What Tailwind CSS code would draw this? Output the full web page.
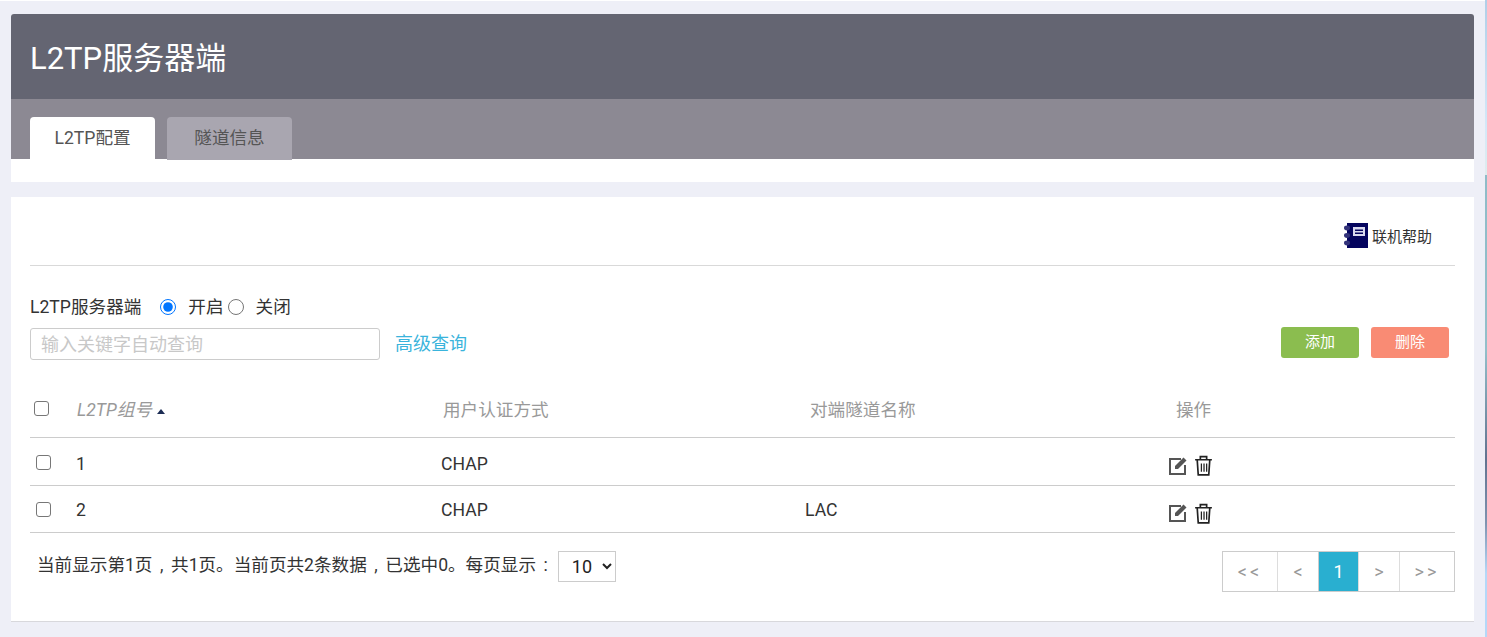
<!DOCTYPE html>
<html lang="zh-CN">
<head>
    <meta charset="UTF-8">
    <title>L2TP服务器端</title>
    <script src="https://cdn.jsdelivr.net/npm/@tailwindcss/browser@4"></script>
</head>
<body class="relative bg-[#eeeff7] h-[637px] overflow-hidden text-[#333] font-['Roboto','Noto_Sans_CJK_SC',sans-serif]">
    <!-- window behind, visible at the right edge -->
    <div class="absolute top-0 right-0 w-[2px] h-[637px] bg-[linear-gradient(to_bottom,#b0cfe8_0%,#d5e8f8_20%,#dfecee_27.400%,#8fbcc8_27.500%,#93bfca_55%,#62728f_72%,#7f93b0_82%,#b5d8f8_90%,#b5d8f8_100%)]"></div>
    <div class="h-[1px] bg-white"></div>
    <div class="pt-[13px] pl-[11px] w-[1474px]">
        <!-- page header -->
        <div class="bg-white rounded-t-[3px] h-[168px]">
            <div class="bg-[#646572] h-[85px] rounded-t-[3px] pl-[19px] pt-[3px] flex items-center text-white text-[31px] leading-none">L2TP服务器端</div>
            <div class="bg-[#8c8993] h-[60px] pl-[19px] pt-[18px] flex gap-[12px] items-start">
                <div class="w-[125px] h-[42px] bg-white rounded-t-[4px] flex items-center justify-center text-[17.6px] text-[#555]">L2TP配置</div>
                <div class="w-[125px] h-[43px] bg-[#a9a6b0] rounded-t-[4px] flex items-center justify-center text-[17.6px] text-[#555]">隧道信息</div>
            </div>
        </div>

        <!-- main card -->
        <div class="bg-white mt-[15px] h-[425px] px-[19px] border-b border-[#d8d8dc]">
            <div class="h-[69px] border-b border-[#d9d9d9] flex justify-end items-start pt-[26px] pr-[23px]">
                <div class="flex items-center gap-[4px] text-[15px] text-[#333]">
                    <svg width="24" height="25" viewBox="0 0 24 25">
                        <rect x="3" y="0" width="21" height="25" fill="#04045e"/>
                        <rect x="9" y="4" width="12" height="9" fill="#d8d8ee"/>
                        <rect x="11" y="6.500" width="8" height="1.500" fill="#04045e"/>
                        <rect x="11" y="9.500" width="8" height="1.500" fill="#04045e"/>
                        <ellipse cx="3" cy="5" rx="3" ry="2.400" fill="#33337a"/>
                        <ellipse cx="3" cy="12.500" rx="3" ry="2.400" fill="#33337a"/>
                        <ellipse cx="3" cy="20" rx="3" ry="2.400" fill="#33337a"/>
                    </svg>
                    <span class="mt-[3px]">联机帮助</span>
                </div>
            </div>

            <div class="flex items-center mt-[30px] h-[24px] text-[17.6px]">
                <span class="-mt-[1px]">L2TP服务器端</span>
                <input type="radio" name="srv" checked class="w-[16px] h-[16px] ml-[19px] -mt-[2px] accent-[#0075ff]">
                <span class="ml-[12px] -mt-[1px]">开启</span>
                <input type="radio" name="srv" class="w-[16px] h-[16px] ml-[4px] -mt-[2px]">
                <span class="ml-[12px] -mt-[1px]">关闭</span>
            </div>

            <div class="flex items-center mt-[8px] h-[32px]">
                <input type="text" placeholder="输入关键字自动查询" class="w-[350px] h-[32px] border border-[#ccc] rounded-[3px] px-[10px] text-[18px] placeholder:text-[#c8c8c8] outline-none">
                <a class="ml-[15px] -mt-[1px] text-[18px] text-[#3ab4dc]">高级查询</a>
                <div class="ml-auto flex gap-[12px] mr-[6px] self-start -mt-[1px]">
                    <button class="w-[78px] h-[31px] bg-[#8bbd4f] rounded-[3px] text-white text-[15px]">添加</button>
                    <button class="w-[78px] h-[31px] bg-[#f98b74] rounded-[3px] text-white text-[15px]">删除</button>
                </div>
            </div>

            <!-- table -->
            <div class="mt-[23px] text-[17.6px]">
                <div class="grid grid-cols-[367px_367px_366px_1fr] h-[55px] border-b border-[#ccc] items-center text-[#999]">
                    <div class="flex items-center">
                        <input type="checkbox" class="appearance-none w-[15px] h-[15px] ml-[4px] mr-[28px] -mt-[2px] border-[1.5px] border-[#777] rounded-[3px]">
                        <span class="italic">L2TP组号</span>
                        <span class="ml-[5px] mt-[4px] w-0 h-0 border-x-[4.500px] border-x-transparent border-b-[5px] border-b-[#1c2c54]"></span>
                    </div>
                    <div class="pl-[46px]">用户认证方式</div>
                    <div class="pl-[46px]">对端隧道名称</div>
                    <div class="pl-[46px]">操作</div>
                </div>
                <div class="grid grid-cols-[367px_367px_366px_1fr] h-[48px] border-b border-[#ccc] items-center pt-[5px]">
                    <div class="flex items-center">
                        <input type="checkbox" class="appearance-none w-[15px] h-[15px] ml-[6px] mr-[25px] -mt-[3px] border-[1.5px] border-[#777] rounded-[3px]">
                        <span>1</span>
                    </div>
                    <div class="pl-[44px]">CHAP</div>
                    <div class="pl-[41px]"></div>
                    <div class="pl-[38px] flex items-center gap-[6px] pt-[3px]">
                        <svg width="20" height="20" viewBox="0 0 20 20" fill="none"><path d="M13 3H2v15h15V9" stroke="#555" stroke-width="2"/><path d="M7 10 15.500 1.500l3 3L10 13H7z" fill="#555"/></svg>
                        <svg width="19" height="21" viewBox="0 0 18 20" fill="none" stroke="#222" stroke-width="1.600"><path d="M1 4.500h16M6 4V1.500h6V4M3 4.500l1 14.500h10l1-14.500"/><path d="M7 8v8M9.500 8v8M12 8v8" stroke-width="1.200"/></svg>
                    </div>
                </div>
                <div class="grid grid-cols-[367px_367px_366px_1fr] h-[47px] border-b border-[#ccc] items-center pt-[3px]">
                    <div class="flex items-center">
                        <input type="checkbox" class="appearance-none w-[15px] h-[15px] ml-[6px] mr-[25px] -mt-[2px] border-[1.5px] border-[#777] rounded-[3px]">
                        <span>2</span>
                    </div>
                    <div class="pl-[44px]">CHAP</div>
                    <div class="pl-[41px]">LAC</div>
                    <div class="pl-[38px] flex items-center gap-[6px] pt-[5px]">
                        <svg width="20" height="20" viewBox="0 0 20 20" fill="none"><path d="M13 3H2v15h15V9" stroke="#555" stroke-width="2"/><path d="M7 10 15.500 1.500l3 3L10 13H7z" fill="#555"/></svg>
                        <svg width="19" height="21" viewBox="0 0 18 20" fill="none" stroke="#222" stroke-width="1.600"><path d="M1 4.500h16M6 4V1.500h6V4M3 4.500l1 14.500h10l1-14.500"/><path d="M7 8v8M9.500 8v8M12 8v8" stroke-width="1.200"/></svg>
                    </div>
                </div>
            </div>

            <!-- footer -->
            <div class="flex items-start mt-[18px]">
                <span class="ml-[7px] text-[17.6px] mt-[1px] [word-spacing:3.2px]">当前显示第1页 , 共1页。当前页共2条数据 , 已选中0。每页显示 :</span>
                <select class="ml-[10px] w-[58px] h-[31px] border border-[#ccc] text-[18px] pl-[9px] text-[#222]"><option>10</option></select>
                <div class="ml-auto flex h-[41px] border border-[#ccc] text-[#999] text-[18px]">
                    <div class="w-[55px] flex items-center justify-center border-r border-[#ddd] tracking-[3px]">&lt;&lt;</div>
                    <div class="w-[41px] flex items-center justify-center border-r border-[#ccc]">&lt;</div>
                    <div class="w-[39px] flex items-center justify-center bg-[#29afd0] text-white text-[18px]">1</div>
                    <div class="w-[42px] flex items-center justify-center border-x border-[#ddd]">&gt;</div>
                    <div class="w-[54px] flex items-center justify-center tracking-[3px]">&gt;&gt;</div>
                </div>
            </div>
        </div>
    </div>
</body>
</html>
